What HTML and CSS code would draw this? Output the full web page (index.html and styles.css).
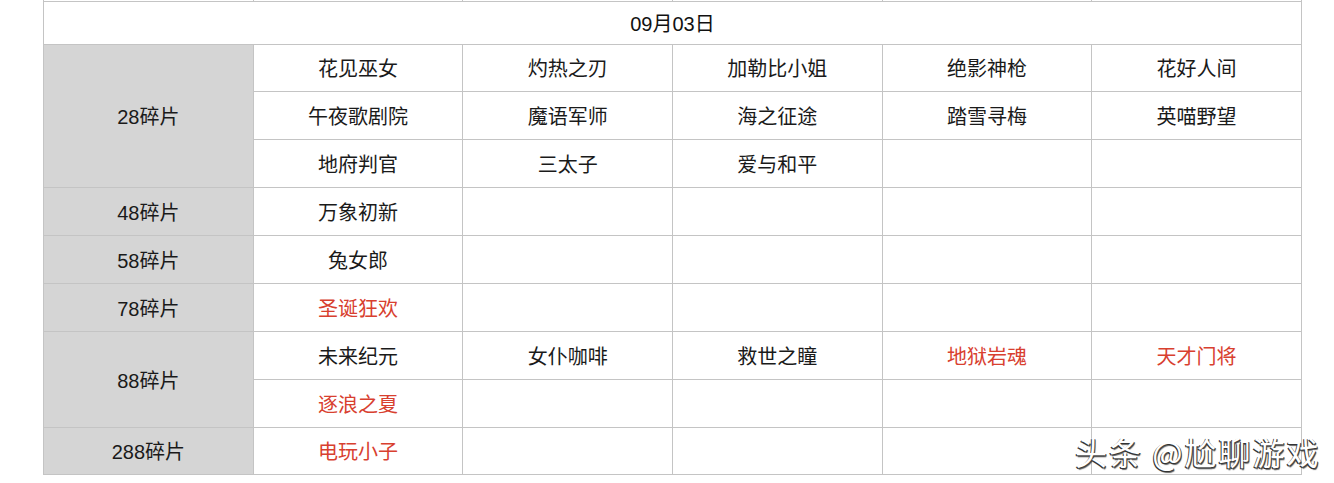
FILE: index.html
```html
<!DOCTYPE html>
<html lang="zh">
<head>
<meta charset="utf-8">
<link rel="stylesheet" href="styles.css">
</head>
<body>
<div class="page">
  <table class="grid">
    <colgroup><col><col><col><col><col><col></colgroup>
    <tr class="cut"><td></td><td></td><td></td><td></td><td></td><td></td></tr>
    <tr class="head"><td colspan="6">09月03日</td></tr>
    <tr class="first"><td class="label" rowspan="3">28碎片</td><td>花见巫女</td><td>灼热之刃</td><td>加勒比小姐</td><td>绝影神枪</td><td>花好人间</td></tr>
    <tr><td>午夜歌剧院</td><td>魔语军师</td><td>海之征途</td><td>踏雪寻梅</td><td>英喵野望</td></tr>
    <tr><td>地府判官</td><td>三太子</td><td>爱与和平</td><td></td><td></td></tr>
    <tr><td class="label">48碎片</td><td>万象初新</td><td></td><td></td><td></td><td></td></tr>
    <tr><td class="label">58碎片</td><td>兔女郎</td><td></td><td></td><td></td><td></td></tr>
    <tr><td class="label">78碎片</td><td class="red">圣诞狂欢</td><td></td><td></td><td></td><td></td></tr>
    <tr><td class="label" rowspan="2">88碎片</td><td>未来纪元</td><td>女仆咖啡</td><td>救世之瞳</td><td class="red">地狱岩魂</td><td class="red">天才门将</td></tr>
    <tr><td class="red">逐浪之夏</td><td></td><td></td><td></td><td></td></tr>
    <tr class="last"><td class="label">288碎片</td><td class="red">电玩小子</td><td></td><td></td><td></td><td></td></tr>
  </table>
  <div class="watermark">头条 @尬聊游戏</div>
</div>
</body>
</html>
```

FILE: styles.css
```css
html, body {
  margin: 0;
  padding: 0;
  background: #ffffff;
}
.page {
  position: relative;
  width: 1334px;
  height: 483px;
  overflow: hidden;
  padding-left: 43px;
  box-sizing: border-box;
  font-family: "Liberation Sans", "Noto Sans CJK SC", sans-serif;
}
.grid {
  border-collapse: collapse;
  table-layout: fixed;
  width: 1258px;
  margin-top: -1px;
}
.grid col {
  width: 209.66px;
}
.grid td {
  border: 1px solid #c4c4c4;
  height: 48px;
  padding: 0;
  text-align: center;
  vertical-align: middle;
  font-size: 20px;
  color: #1a1a1a;
  box-sizing: border-box;
}
.grid tr.cut td {
  height: 2px;
  border-top: none;
}
.grid tr.head td {
  height: 43px;
  color: #111111;
}
.grid tr.first td {
  height: 47px;
}
.grid tr.last td {
  height: 47px;
}
.grid td.label {
  background: #d5d5d5;
}
.grid tr.first td.label {
  height: auto;
}
.grid td.red {
  color: #d8402f;
}
.watermark {
  position: absolute;
  left: 1075px;
  top: 431px;
  font-family: "Noto Sans CJK SC", sans-serif;
  font-size: 32px;
  line-height: 40px;
  letter-spacing: 2px;
  color: #ffffff;
  text-shadow: -1px 1px 0 #333, 1px 1px 0 #444, 1px 2px 1px rgba(0,0,0,0.6);
  white-space: nowrap;
}
```
